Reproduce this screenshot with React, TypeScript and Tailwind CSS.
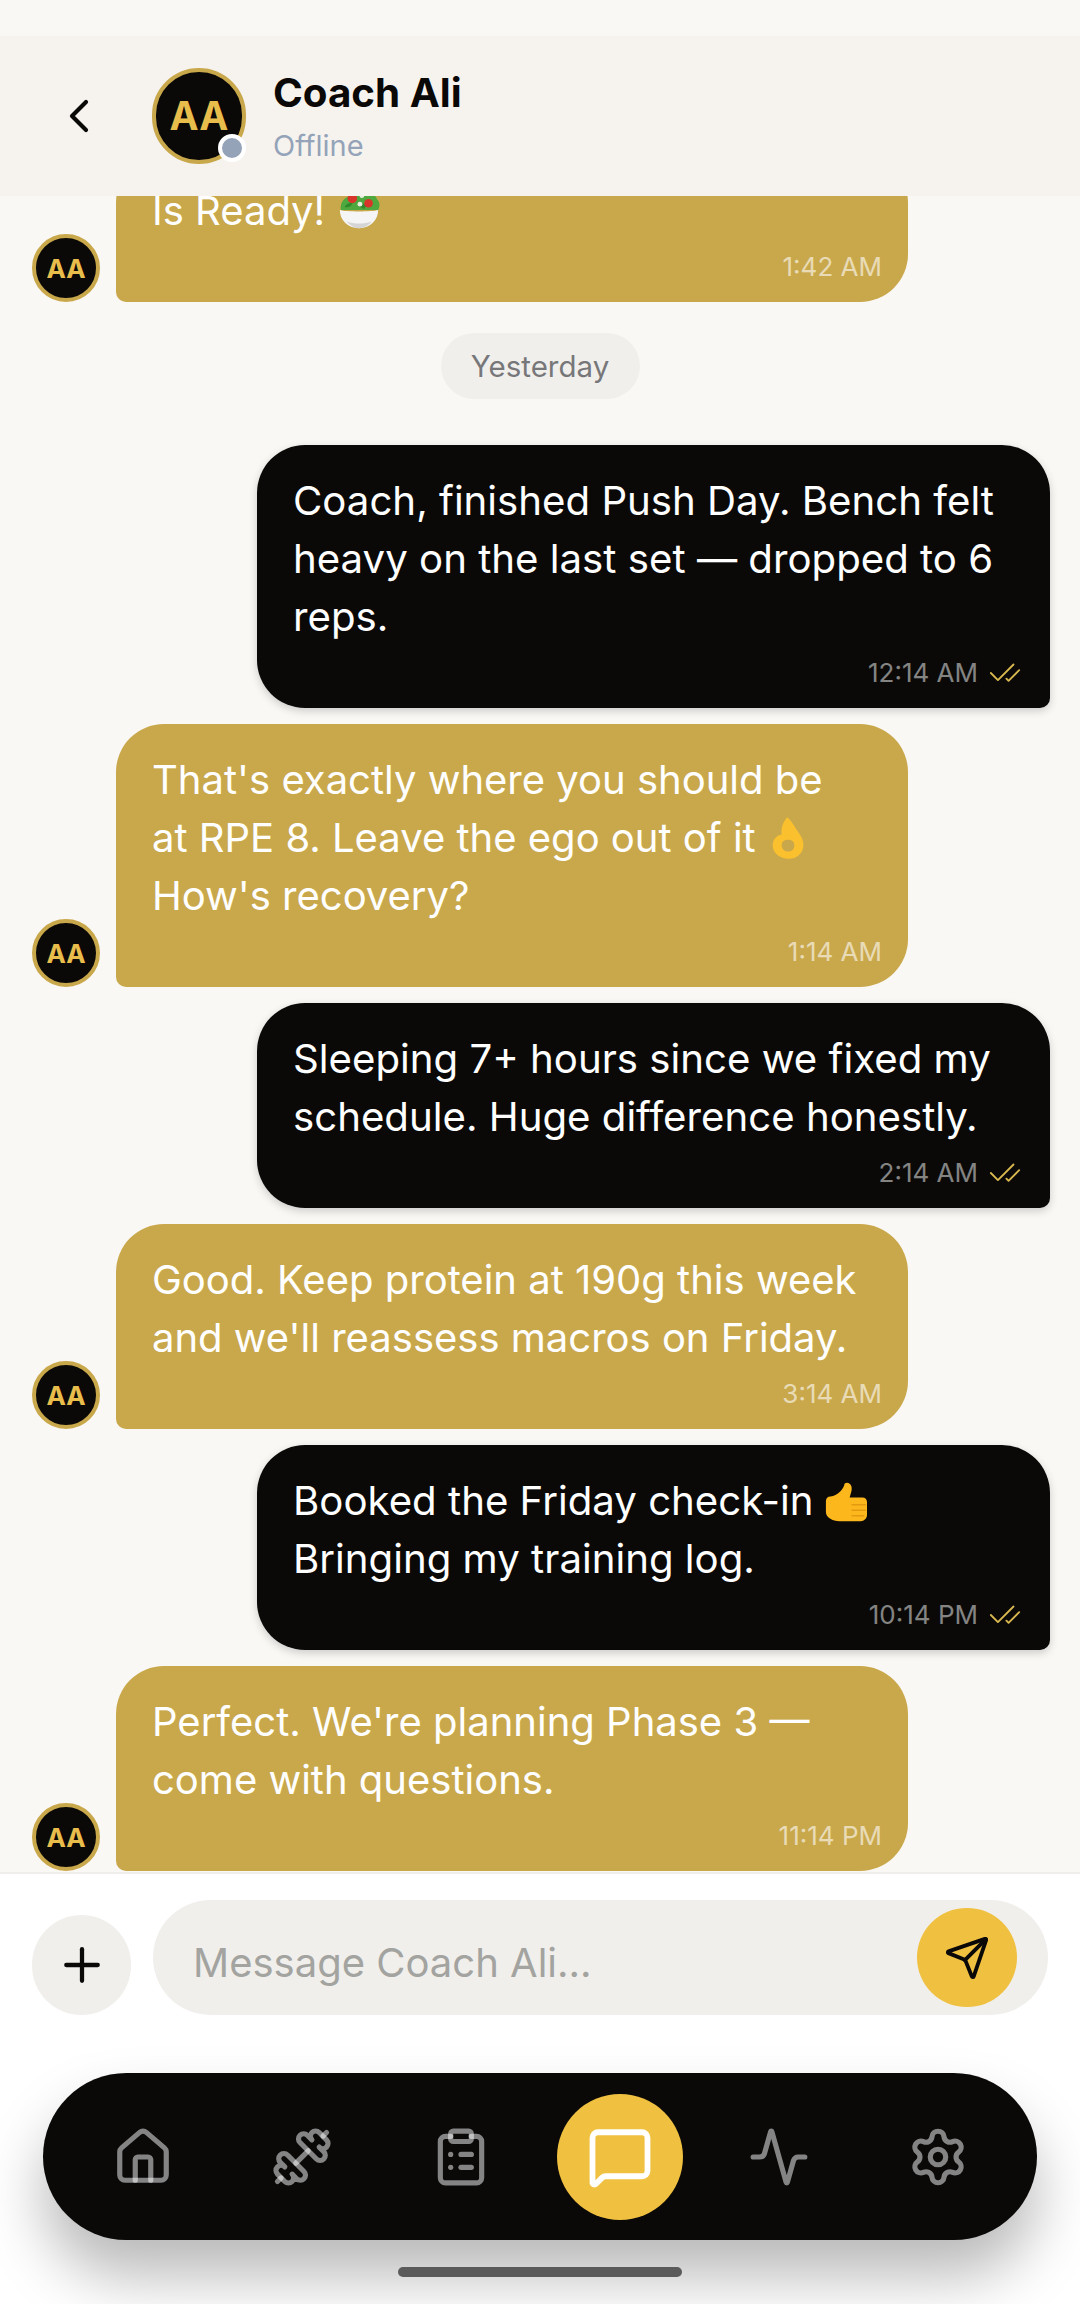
import { Activity, CheckCheck, ChevronLeft, ClipboardList, Dumbbell, House, MessageSquare, Plus, Send, Settings } from "lucide-react";
import type { ReactNode } from "react";

const Salad = () => (
  <svg viewBox="0 0 48 42" className="inline-block h-[42px] w-[46px] align-[-5px]">
    <path d="M5 22C4 14 9 9 14 8c3-5 10-7 15-4 6-2 12 2 14 7 3 3 3 7 1 11z" fill="#4fa83d" />
    <path d="M9 19c2-4 5-5 8-4-1 3-3 5-8 4zM24 18c3-3 6-3 8-1l-3 4z" fill="#2f8a2a" />
    <circle cx="17" cy="10" r="5" fill="#d8352a" />
    <circle cx="34" cy="15" r="4.5" fill="#d8352a" />
    <circle cx="27" cy="7" r="2.5" fill="#e8efe0" />
    <circle cx="25" cy="16" r="2.5" fill="#e8efe0" />
    <path d="M4 22c6 2 34 2 40 0 0 10-8 19-20 19S4 32 4 22z" fill="#f5f5f5" />
    <path d="M11 34c4 4 8 7 13 7 6 0 10-3 13-7-8 3-18 3-26 0z" fill="#d5d5d5" />
  </svg>
);

const OkHand = () => (
  <svg viewBox="0 0 40 48" className="ml-[3px] inline-block h-[46px] w-[36px] align-[-9px]">
    <path d="M19 1c4 3 7 8 10 13 5 7 9 12 8 20-1 8-8 13-16 13C11 47 3 41 3 32c0-6 4-11 10-12-1-6 1-13 6-19zM20 26c-4 0-7 2-7 6 0 4 3 7 7 7 5 0 7-3 7-7 0-4-3-6-7-6z" fill="#fbc02d" fillRule="evenodd" />
  </svg>
);

const ThumbsUp = () => (
  <svg viewBox="0 0 46 44" className="inline-block h-[44px] w-[42px] align-[-9px]">
    <path d="M24 1c4 0 6 4 5 9l-2 7h14c3 0 5 2 5 5v14c0 4-3 7-7 7H16C8 43 1 39 1 33V21c0-3 2-5 5-5 8-1 13-7 15-12 0-2 1-3 3-3z" fill="#fbb71c" />
    <path d="M29 25h16M29 31h16M29 37h14" stroke="#e69a10" strokeWidth="1.5" />
  </svg>
);

function Avatar({ small }: { small?: boolean }) {
  return (
    <div
      className={
        small
          ? "flex h-[68px] w-[68px] shrink-0 items-center justify-center rounded-full border-[4px] border-[#c9a84c] bg-[#0a0908] text-[26px] font-bold text-[#e8bd4c]"
          : "relative flex h-[96px] w-[94px] shrink-0 items-center justify-center rounded-full border-[4px] border-[#c9a84c] bg-[#0a0908] text-[39px] font-bold text-[#e8bd4c]"
      }
    >
      AA
      {!small && (
        <span className="absolute bottom-[-2px] right-[-4px] h-[28px] w-[28px] rounded-full border-[4px] border-white bg-[#94a3b8]" />
      )}
    </div>
  );
}

function Coach({ children, time }: { children: ReactNode; time: string }) {
  return (
    <div className="flex items-end gap-[16px] pl-[32px]">
      <Avatar small />
      <div className="w-[792px] rounded-t-[48px] rounded-bl-[10px] rounded-br-[48px] bg-[#c9a84c] pb-[16px] pl-[36px] pr-[26px] pt-[27px] text-[40px] leading-[58px] text-white">
        <div>{children}</div>
        <div className="mt-[7px] text-right text-[26px] leading-[39px] text-white/60">{time}</div>
      </div>
    </div>
  );
}

function Mine({ children, time }: { children: ReactNode; time: string }) {
  return (
    <div className="flex justify-end pr-[30px]">
      <div className="w-[793px] rounded-t-[48px] rounded-bl-[48px] rounded-br-[10px] bg-[#0a0908] pb-[16px] pl-[36px] pr-[28px] pt-[27px] text-[40.2px] leading-[58px] text-white shadow-[0_3px_8px_rgba(0,0,0,0.18)]">
        <div>{children}</div>
        <div className="mt-[7px] flex items-center justify-end gap-[10px] text-[26px] leading-[39px] text-white/50">
          {time}
          <CheckCheck size={34} strokeWidth={1.3} color="#d9b84f" />
        </div>
      </div>
    </div>
  );
}

const dim = "rgba(255,255,255,0.5)";

export default function App() {
  return (
    <div className="flex h-[2304px] w-[1080px] flex-col overflow-hidden bg-[#faf8f5] font-['Inter','Noto_Sans',sans-serif]">
      <div className="h-[36px] shrink-0 bg-[#faf8f5]" />
      <header className="z-10 flex h-[160px] shrink-0 items-center bg-[#f6f3ef] pl-[51px]">
        <ChevronLeft size={56} strokeWidth={1.8} color="#0a0908" />
        <div className="ml-[45px]">
          <Avatar />
        </div>
        <div className="ml-[27px] flex flex-col pt-[2px]">
          <span className="text-[40.3px] font-bold leading-[50px] text-[#0a0908]">Coach Ali</span>
          <span className="mt-[8px] text-[29px] leading-[40px] text-[#94a3b8]">Offline</span>
        </div>
      </header>

      <main className="flex min-h-0 flex-1 flex-col justify-end gap-[16px] overflow-hidden pb-[1px]">
        <Coach time="1:42 AM">
          Is Ready! <Salad />
        </Coach>
        <div className="mb-[30px] mt-[15px] flex justify-center">
          <span className="flex h-[66px] w-[199px] items-center justify-center rounded-full bg-[#f0efec] text-[29.5px] text-[#77777a]">
            Yesterday
          </span>
        </div>
        <Mine time="12:14 AM">
          Coach, finished Push Day. Bench felt
          <br />
          heavy on the last set — dropped to 6
          <br />
          reps.
        </Mine>
        <Coach time="1:14 AM">
          That's exactly where you should be
          <br />
          at RPE 8. Leave the ego out of it <OkHand />
          <br />
          How's recovery?
        </Coach>
        <Mine time="2:14 AM">
          Sleeping 7+ hours since we fixed my
          <br />
          schedule. Huge difference honestly.
        </Mine>
        <Coach time="3:14 AM">
          Good. Keep protein at 190g this week
          <br />
          and we'll reassess macros on Friday.
        </Coach>
        <Mine time="10:14 PM">
          Booked the Friday check-in <ThumbsUp />
          <br />
          Bringing my training log.
        </Mine>
        <Coach time="11:14 PM">
          Perfect. We're planning Phase 3 —
          <br />
          come with questions.
        </Coach>
      </main>

      <footer className="flex h-[432px] shrink-0 flex-col border-t-2 border-[#f0eeea] bg-white">
        <div className="mt-[26px] flex items-end pl-[32px] pr-[32px]">
          <button className="flex h-[100px] w-[99px] items-center justify-center rounded-full bg-[#f0efec]">
            <Plus size={54} strokeWidth={1.9} color="#0a0908" />
          </button>
          <div className="ml-[22px] flex h-[115px] flex-1 items-center justify-between rounded-full bg-[#f0efec] pl-[40px] pr-[31px]">
            <span className="pt-[10px] text-[40px] text-[#a3a3a0]">Message Coach Ali...</span>
            <span className="flex h-[99px] w-[100px] items-center justify-center rounded-full bg-[#f0c040]">
              <Send size={46} strokeWidth={2} color="#0a0908" />
            </span>
          </div>
        </div>

        <nav className="mx-[43px] mt-[58px] grid h-[167px] grid-cols-6 items-center rounded-full bg-[#0a0908] px-[20px] shadow-[0_36px_60px_rgba(0,0,0,0.28)]">
          <span className="flex justify-center"><House size={62} strokeWidth={2} color={dim} /></span>
          <span className="flex justify-center"><Dumbbell size={62} strokeWidth={2} color={dim} /></span>
          <span className="flex justify-center"><ClipboardList size={62} strokeWidth={2} color={dim} /></span>
          <span className="flex justify-center">
            <span className="flex h-[126px] w-[126px] items-center justify-center rounded-full bg-[#f0c040]">
              <MessageSquare size={66} strokeWidth={2.1} color="#ffffff" />
            </span>
          </span>
          <span className="flex justify-center"><Activity size={62} strokeWidth={2} color={dim} /></span>
          <span className="flex justify-center"><Settings size={62} strokeWidth={2} color={dim} /></span>
        </nav>

        <div className="mx-auto mt-[27px] h-[10px] w-[284px] rounded-full bg-[#5a5a5a]" />
      </footer>
    </div>
  );
}
